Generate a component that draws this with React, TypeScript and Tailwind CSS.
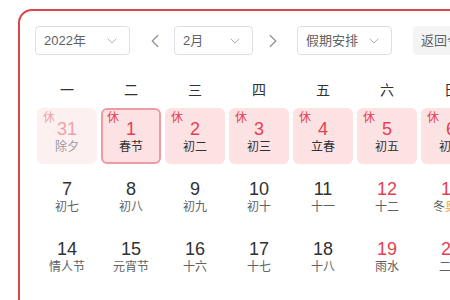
import React from "react";
import { ChevronDown, ChevronLeft, ChevronRight } from "lucide-react";

type Day = {
  n: number;
  l: string;
  rest?: boolean;
  red?: boolean;
  faded?: boolean;
  today?: boolean;
  extra?: string;
};

const rows: Day[][] = [
  [
    { n: 31, l: "除夕", rest: true, faded: true },
    { n: 1, l: "春节", rest: true, today: true },
    { n: 2, l: "初二", rest: true },
    { n: 3, l: "初三", rest: true },
    { n: 4, l: "立春", rest: true },
    { n: 5, l: "初五", rest: true },
    { n: 6, l: "初六", rest: true },
  ],
  [
    { n: 7, l: "初七" },
    { n: 8, l: "初八" },
    { n: 9, l: "初九" },
    { n: 10, l: "初十" },
    { n: 11, l: "十一" },
    { n: 12, l: "十二", red: true },
    { n: 13, l: "冬", red: true, extra: "奥会" },
  ],
  [
    { n: 14, l: "情人节" },
    { n: 15, l: "元宵节" },
    { n: 16, l: "十六" },
    { n: 17, l: "十七" },
    { n: 18, l: "十八" },
    { n: 19, l: "雨水", red: true },
    { n: 20, l: "二十", red: true },
  ],
  [
    { n: 21, l: "廿一" },
    { n: 22, l: "廿二" },
    { n: 23, l: "廿三" },
    { n: 24, l: "廿四" },
    { n: 25, l: "廿五" },
    { n: 26, l: "廿六", red: true },
    { n: 27, l: "廿七", red: true },
  ],
];

const weekdays = ["一", "二", "三", "四", "五", "六", "日"];

function Select({ label, width }: { label: string; width: string }) {
  return (
    <div
      className={`${width} h-[29px] flex items-center justify-between pl-[8px] pr-[9px] border border-[#dcdfe6] rounded-[4px] bg-white text-[13px] text-[#606266]`}
    >
      <span>{label}</span>
      <ChevronDown size={16} strokeWidth={1.4} color="#a8abb2" />
    </div>
  );
}

function Cell({ d }: { d: Day }) {
  const isRest = !!d.rest;
  const numColor = isRest || d.red ? "text-[#e5404f]" : "text-[#303133]";
  const bg = isRest ? "bg-[#fde2e4]" : "";
  const border = d.today ? "border-2 border-[#ee9aa2]" : "";
  const op = d.faded ? "opacity-50" : "";
  return (
    <div className="p-[2px] w-[64px] h-[60px]">
      <div
        className={`relative w-[60px] h-[56px] rounded-[6px] ${bg} ${border} ${op} flex flex-col items-center ${
          d.today ? "pt-[9px]" : "pt-[11px]"
        }`}
      >
        {isRest && (
          <span className={`absolute ${d.today ? "top-[1px] left-[4px]" : "top-[3px] left-[6px]"} text-[12px] leading-[14px] text-[#e5404f]`}>
            休
          </span>
        )}
        <div className={`text-[18px] leading-[20px] ${numColor}`}>{d.n}</div>
        <div
          className={`text-[12px] leading-[16px] whitespace-nowrap ${
            isRest ? "text-[#303133]" : "text-[#606266]"
          }`}
        >
          {d.l}
          {d.extra && <span className="text-[#e6a23c]">{d.extra}</span>}
        </div>
      </div>
    </div>
  );
}

export default function App() {
  return (
    <div
      className="w-[450px] h-[300px] overflow-hidden bg-white pl-[18px] pt-[9px]"
      style={{ fontFamily: '"Liberation Sans", "Noto Sans CJK SC", sans-serif' }}
    >
      <div className="w-[520px] h-[400px] border-2 border-[#d9474d] rounded-tl-[14px] pl-[15px] pt-[15px]">
        <div className="flex items-center">
          <Select label="2022年" width="w-[95px]" />
          <ChevronLeft className="ml-[14px]" size={22} strokeWidth={1.4} color="#909399" />
          <div className="ml-[8px]">
            <Select label="2月" width="w-[79px]" />
          </div>
          <ChevronRight className="ml-[9px]" size={22} strokeWidth={1.4} color="#909399" />
          <div className="ml-[13px]">
            <Select label="假期安排" width="w-[95px]" />
          </div>
          <div className="ml-[21px] h-[29px] px-[8px] flex items-center rounded-[4px] bg-[#f4f4f5] text-[13px] text-[#606266] whitespace-nowrap">
            返回今天
          </div>
        </div>
        <div className="mt-[23px] grid grid-cols-[repeat(7,64px)] h-[24px]">
          {weekdays.map((w) => (
            <div key={w} className="flex items-center justify-center text-[14px] text-[#303133]">
              {w}
            </div>
          ))}
        </div>
        <div className="mt-[4px] grid grid-cols-[repeat(7,64px)]">
          {rows.flat().map((d, i) => (
            <Cell key={i} d={d} />
          ))}
        </div>
      </div>
    </div>
  );
}
